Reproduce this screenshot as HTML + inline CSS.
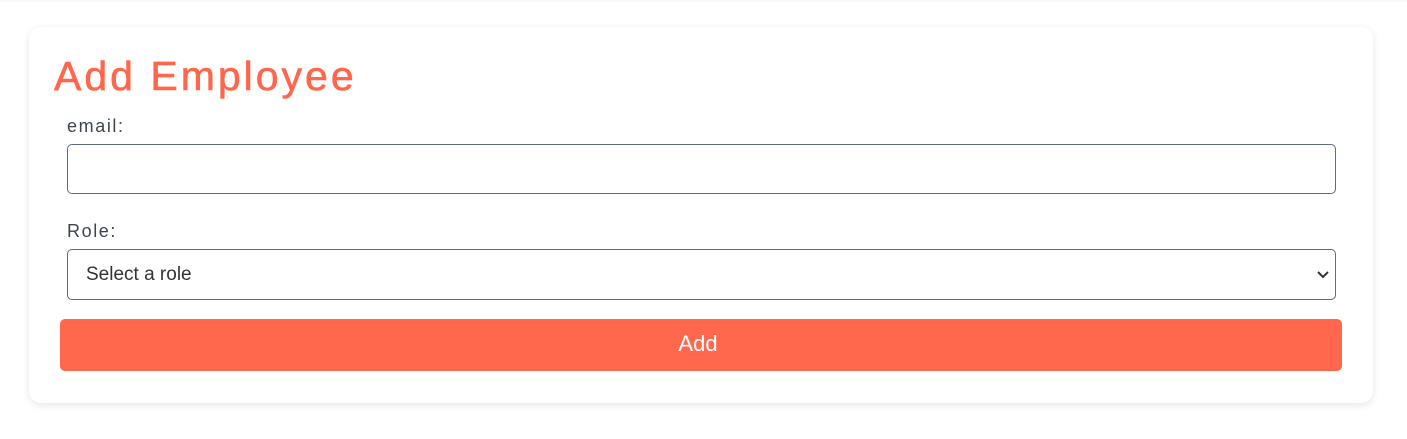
<!DOCTYPE html>
<html><head><style>
html,body{margin:0;padding:0;background:#fff;width:1407px;height:439px;overflow:hidden;font-family:"Liberation Sans",sans-serif}
.top{position:absolute;left:0;top:0;width:1407px;height:2px;background:#fcf6f8}
.card{position:absolute;left:29px;top:27px;width:1344px;height:376px;background:#fff;border-radius:12px;box-shadow:0 2px 8px rgba(0,0,0,0.10)}
h1{position:absolute;left:54px;top:53px;margin:0;font-size:41px;font-weight:normal;color:#ff674c;line-height:46px;letter-spacing:3px;-webkit-text-stroke:0.6px #ff674c}
.lbl{position:absolute;left:67px;font-size:18px;color:#3d4351;letter-spacing:1.6px}
.box{position:absolute;left:67px;width:1269px;border:1px solid #5f6b80;border-radius:5px;background:#fff;box-sizing:border-box}
.sel{font-size:19px;color:#333;line-height:48px;padding-left:18px}
.btn{position:absolute;left:60px;top:319px;width:1282px;height:52px;background:#ff684d;border-radius:5px;color:#fff;font-size:22px;text-align:center;line-height:50px;text-indent:-6px}
</style></head><body>
<div class="top"></div>
<div class="card"></div>
<h1>Add Employee</h1>
<div class="lbl" style="top:116px">email:</div>
<div class="box" style="top:144px;height:50px"></div>
<div class="lbl" style="top:221px">Role:</div>
<div class="box sel" style="top:249px;height:51px;line-height:50px">Select a role
<svg style="position:absolute;right:6px;top:20px" width="12" height="10" viewBox="0 0 12 10"><path d="M1 2 L6 7 L11 2" fill="none" stroke="#333" stroke-width="2"/></svg></div>
<div class="btn">Add</div>
</body></html>
